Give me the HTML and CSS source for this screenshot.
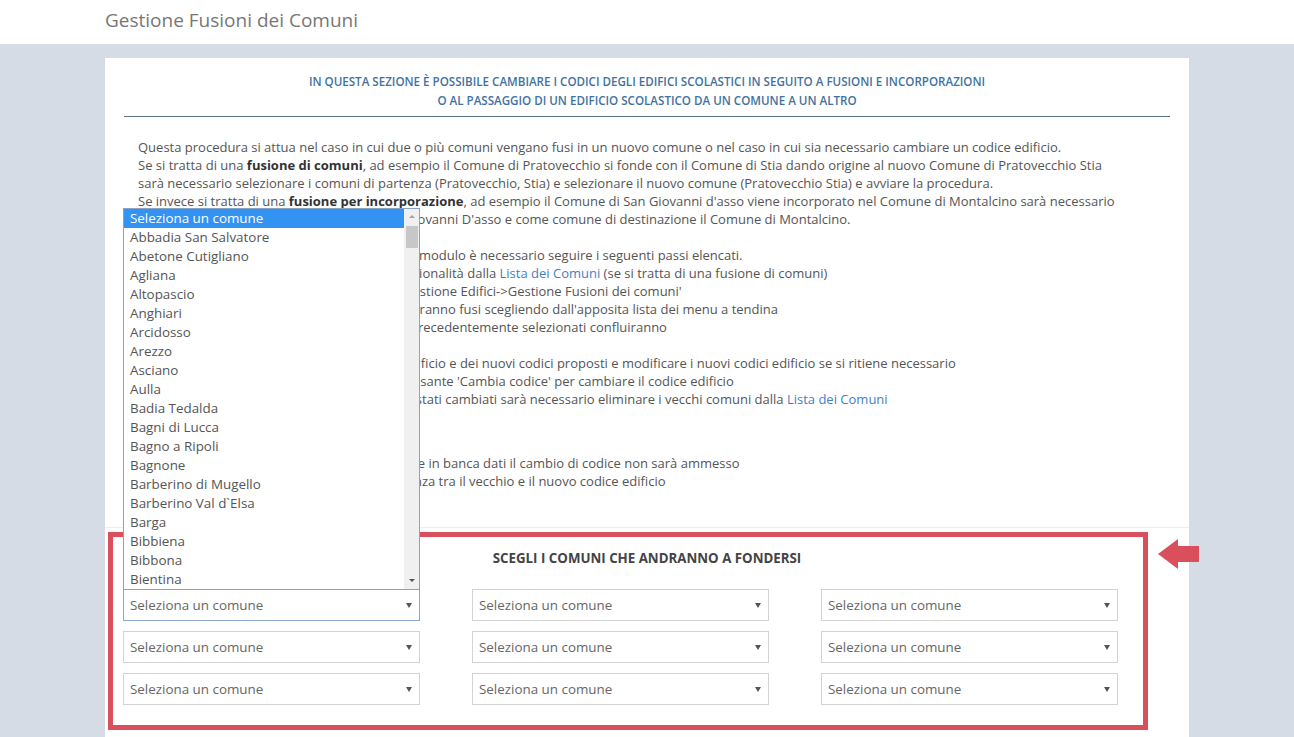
FILE: index.html
```html
<!DOCTYPE html>
<html lang="it">
<head>
  <meta charset="UTF-8">
  <meta name="viewport" content="width=device-width, initial-scale=1.0">
  <title>Gestione Fusioni dei Comuni</title>
  <link rel="stylesheet" href="styles.css">
</head>
<body>
  <header class="page-header">
    <h1 class="page-title">Gestione Fusioni dei Comuni</h1>
  </header>

  <main class="page-body">
    <div class="panel">

      <!-- istruzioni -->
      <section class="panel-section intro">
        <h2 class="intro-title">In questa sezione è possibile cambiare i codici degli edifici scolastici in seguito a fusioni e incorporazioni<br>o al passaggio di un edificio scolastico da un comune a un altro</h2>
        <hr class="intro-rule">
        <p class="intro-text">
          Questa procedura si attua nel caso in cui due o più comuni vengano fusi in un nuovo comune o nel caso in cui sia necessario cambiare un codice edificio.<br>
          Se si tratta di una <strong>fusione di comuni</strong>, ad esempio il Comune di Pratovecchio si fonde con il Comune di Stia dando origine al nuovo Comune di Pratovecchio Stia<br>
          sarà necessario selezionare i comuni di partenza (Pratovecchio, Stia) e selezionare il nuovo comune (Pratovecchio Stia) e avviare la procedura.<br>
          Se invece si tratta di una <strong>fusione per incorporazione</strong>, ad esempio il Comune di San Giovanni d'asso viene incorporato nel Comune di Montalcino sarà necessario<br>
          specificare come partenza il Comune di San Giovanni D'asso e come comune di destinazione il Comune di Montalcino.<br>
          <br>
          Per la corretta compilazione e l'invio finale del modulo è necessario seguire i seguenti passi elencati.<br>
          1. Eliminare i Comuni mediante l'apposita funzionalità dalla <a href="#">Lista dei Comuni</a> (se si tratta di una fusione di comuni)<br>
          2. Accedere alla sezione di menu superiore 'Gestione Edifici-&gt;Gestione Fusioni dei comuni'<br>
          3. Selezionare nel modulo i comuni che poi verranno fusi scegliendo dall'apposita lista dei menu a tendina<br>
          4. Selezionare il nuovo comune ove i comuni precedentemente selezionati confluiranno<br>
          <br>
          5. Prendere quindi visione dei vecchi Codici edificio e dei nuovi codici proposti e modificare i nuovi codici edificio se si ritiene necessario<br>
          6. Per ciascun edificio della lista cliccare sul pulsante 'Cambia codice' per cambiare il codice edificio<br>
          7. Una volta che tutti i codici degli edifici sono stati cambiati sarà necessario eliminare i vecchi comuni dalla <a href="#">Lista dei Comuni</a>
        </p>
        <p class="intro-text intro-notes">
          Se il nuovo codice edificio risulterà già presente in banca dati il cambio di codice non sarà ammesso<br>
          Il nuovo codice deve rispettare la corrispondenza tra il vecchio e il nuovo codice edificio
        </p>
      </section>

      <!-- scelta dei comuni -->
      <section class="panel-section merge">
        <div class="mark-frame"></div>
        <svg class="mark-arrow" width="41" height="30" viewBox="0 0 41 30">
          <polygon points="0,15 20,0 20,7 41,7 41,23 20,23 20,30" fill="#d9505c"/>
        </svg>

        <h3 class="merge-title">Scegli i comuni che andranno a fondersi</h3>

        <div class="merge-grid">
          <div class="combo is-open">
            <span class="combo-value">Seleziona un comune</span>
            <div class="listbox">
              <ul class="listbox-options">
                <li class="is-selected">Seleziona un comune</li>
                <li>Abbadia San Salvatore</li>
                <li>Abetone Cutigliano</li>
                <li>Agliana</li>
                <li>Altopascio</li>
                <li>Anghiari</li>
                <li>Arcidosso</li>
                <li>Arezzo</li>
                <li>Asciano</li>
                <li>Aulla</li>
                <li>Badia Tedalda</li>
                <li>Bagni di Lucca</li>
                <li>Bagno a Ripoli</li>
                <li>Bagnone</li>
                <li>Barberino di Mugello</li>
                <li>Barberino Val d`Elsa</li>
                <li>Barga</li>
                <li>Bibbiena</li>
                <li>Bibbona</li>
                <li>Bientina</li>
              </ul>
              <div class="scrollbar">
                <span class="scroll-up"></span>
                <span class="scroll-thumb"></span>
                <span class="scroll-down"></span>
              </div>
            </div>
          </div>
          <div class="combo"><span class="combo-value">Seleziona un comune</span></div>
          <div class="combo"><span class="combo-value">Seleziona un comune</span></div>
          <div class="combo"><span class="combo-value">Seleziona un comune</span></div>
          <div class="combo"><span class="combo-value">Seleziona un comune</span></div>
          <div class="combo"><span class="combo-value">Seleziona un comune</span></div>
          <div class="combo"><span class="combo-value">Seleziona un comune</span></div>
          <div class="combo"><span class="combo-value">Seleziona un comune</span></div>
          <div class="combo"><span class="combo-value">Seleziona un comune</span></div>
        </div>
      </section>

    </div>
  </main>
</body>
</html>
```

FILE: styles.css
```css
body {
  margin: 0;
  font-family: "Open Sans", Arial, sans-serif;
  font-size: 13px;
  color: #555;
  background: #d6dce5;
}

/* top bar */
.page-header {
  height: 44px;
  background: #fff;
  box-sizing: border-box;
  padding: 7px 105px 0;
}

.page-title {
  margin: 0;
  font-size: 19px;
  font-weight: 400;
  line-height: 26px;
  color: #777;
}

.page-body {
  padding: 14px 105px 0;
}

.panel {
  background: #fff;
}

/* instructions */
.intro {
  padding: 14px 0 37px;
}

.intro-title {
  margin: 0;
  font-size: 11.6px;
  font-weight: 600;
  line-height: 19px;
  text-align: center;
  text-transform: uppercase;
  color: #41729f;
}

.intro-rule {
  margin: 6px 19px 0;
  border: 0;
  border-top: 1px solid #5d7181;
}

.intro-text {
  margin: 21px 0 0;
  padding: 0 33px;
  line-height: 18px;
  white-space: nowrap;
}

.intro-text strong {
  color: #333;
}

.intro-text a {
  color: #3f7fbf;
  text-decoration: none;
}

.intro-notes {
  margin-top: 46px;
}

/* merge form */
.merge {
  position: relative;
  border-top: 1px solid #eceef2;
  padding: 20px 18px 40px;
}

.merge-title {
  margin: 0;
  font-size: 13.3px;
  font-weight: 700;
  line-height: 20px;
  text-align: center;
  text-transform: uppercase;
  color: #444;
}

.merge-grid {
  display: grid;
  grid-template-columns: repeat(3, 297px);
  column-gap: 52px;
  row-gap: 10px;
  margin-top: 21px;
}

.combo {
  position: relative;
  height: 32px;
  box-sizing: border-box;
  border: 1px solid #d3d3d3;
  padding-left: 6px;
  display: flex;
  align-items: center;
  font-size: 13.4px;
  color: #666;
}

.combo::after {
  content: '';
  position: absolute;
  right: 7px;
  top: 13px;
  border-left: 3px solid transparent;
  border-right: 3px solid transparent;
  border-top: 5px solid #555;
}

.combo.is-open {
  border-color: #8da7c8;
}

/* open dropdown list of the first combo */
.listbox {
  position: absolute;
  left: -1px;
  bottom: 100%;
  width: 297px;
  height: 382px;
  box-sizing: border-box;
  border: 1px solid #8aa3c4;
  background: #fff;
  display: flex;
  z-index: 3;
}

.listbox-options {
  flex: 1;
  margin: 0;
  padding: 0;
  list-style: none;
}

.listbox-options li {
  height: 19px;
  line-height: 19px;
  padding-left: 6px;
  color: #555;
}

.listbox-options li.is-selected {
  background: #3393f2;
  color: #fff;
}

.scrollbar {
  width: 15px;
  background: #f0f0f0;
  display: flex;
  flex-direction: column;
  align-items: center;
}

.scroll-up,
.scroll-down {
  width: 0;
  height: 0;
  border-left: 3px solid transparent;
  border-right: 3px solid transparent;
}

.scroll-up {
  margin-top: 6px;
  border-bottom: 3px solid #a3a3a3;
}

.scroll-thumb {
  width: 12px;
  height: 22px;
  margin-top: 8px;
  background: #c7c7c7;
}

.scroll-down {
  margin-top: auto;
  margin-bottom: 7px;
  border-top: 3px solid #555;
}

/* red highlight drawn over the form */
.mark-frame {
  position: absolute;
  left: 3px;
  top: 4px;
  width: 1040px;
  height: 198px;
  box-sizing: border-box;
  border: 5px solid #d9505c;
  pointer-events: none;
  z-index: 2;
}

.mark-arrow {
  position: absolute;
  left: 1053px;
  top: 11px;
}
```
